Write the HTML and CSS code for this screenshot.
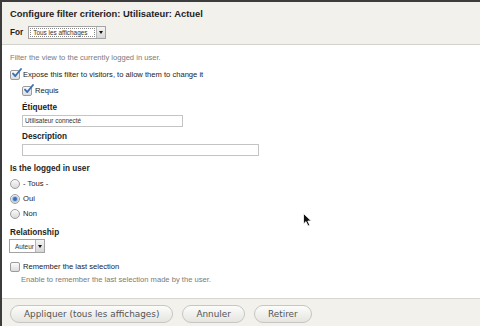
FILE: index.html
```html
<!DOCTYPE html>
<html lang="fr">
<head>
    <meta charset="UTF-8">
    <title>Configure filter criterion</title>
    <link rel="stylesheet" href="styles.css">
</head>
<body>
    <div class="dialog">
        <div class="head">
            <h1 class="title">Configure filter criterion: Utilisateur: Actuel</h1>
            <div class="for-row">
                <span class="for-label">For</span>
                <span class="select select-wide">
                    <span class="select-text focused">Tous les affichages</span>
                    <span class="select-btn"></span>
                </span>
            </div>
        </div>

        <div class="content">
            <p class="hint">Filter the view to the currently logged in user.</p>

            <div class="check-row row-expose">
                <span class="box"><svg class="tick" width="11" height="11" viewBox="0 0 11 11"><path d="M2 5.6 L4.3 8 L10 1" /></svg></span>
                <span>Expose this filter to visitors, to allow them to change it</span>
            </div>

            <div class="sub">
                <div class="check-row row-required">
                    <span class="box"><svg class="tick" width="11" height="11" viewBox="0 0 11 11"><path d="M2 5.6 L4.3 8 L10 1" /></svg></span>
                    <span>Requis</span>
                </div>
                <div class="label label-first">Étiquette</div>
                <div class="text-input input-short">Utilisateur connecté</div>
                <div class="label label-next">Description</div>
                <div class="text-input input-long"></div>
            </div>

            <div class="label label-group">Is the logged in user</div>
            <div class="radios">
                <div class="radio-row"><span class="radio"></span>- Tous -</div>
                <div class="radio-row"><span class="radio checked"></span>Oui</div>
                <div class="radio-row"><span class="radio"></span>Non</div>
            </div>

            <div class="label label-rel">Relationship</div>
            <span class="select select-small">
                <span class="select-text">Auteur</span>
                <span class="select-btn"></span>
            </span>

            <div class="check-row row-remember">
                <span class="box"></span>
                <span>Remember the last selection</span>
            </div>
            <p class="hint hint-indent">Enable to remember the last selection made by the user.</p>
        </div>

        <div class="foot">
            <button class="btn">Appliquer (tous les affichages)</button>
            <button class="btn">Annuler</button>
            <button class="btn">Retirer</button>
        </div>

        <!-- pointeur de la souris -->
        <svg class="cursor" width="10" height="14" viewBox="0 0 10 14">
            <path d="M0.5 0.5 L0.5 11 L3 8.6 L5 13 L6.8 12.2 L4.8 8 L8.3 8 Z" fill="#111" stroke="#fff" stroke-width="0.8"/>
        </svg>
    </div>
</body>
</html>
```

FILE: styles.css
```css
html, body {
    margin: 0;
    padding: 0;
    height: 100%;
    background: #ffffff;
}

.dialog {
    position: relative;
    height: 100vh;
    box-sizing: border-box;
    display: flex;
    flex-direction: column;
    border-top: 2px solid #3c3c3c;
    border-left: 2px solid #3c3c3c;
    font-family: "Liberation Sans", Arial, sans-serif;
    font-size: 7.6px;
    color: #222;
}

/* en-tete */
.head {
    background: #f2f1ec;
    border-bottom: 1px solid #d3d2cd;
    padding: 6px 8px 5px;
}

.title {
    margin: 0;
    font-size: 9.4px;
    line-height: 11px;
    font-weight: bold;
    color: #1e1e1e;
}

.for-row {
    display: flex;
    align-items: center;
    height: 14px;
    margin-top: 6px;
}

.for-label {
    font-weight: bold;
    font-size: 8.2px;
    margin-right: 5px;
}

/* listes deroulantes */
.select {
    display: inline-flex;
    box-sizing: border-box;
    border: 1px solid #a3a3a3;
    background: #fff;
    font-size: 6.4px;
    color: #333;
}

.select-wide {
    width: 78px;
    height: 13px;
}

.select-small {
    width: 36px;
    height: 14px;
    margin-top: 1px;
    margin-left: -1px;
}

.select-text {
    flex: 1;
    display: flex;
    align-items: center;
    padding-left: 3px;
    margin: 1px;
}

.select-text.focused {
    outline: 1px dotted #888;
    outline-offset: -1px;
}

.select-small .select-text {
    padding-left: 4px;
}

.select-btn {
    position: relative;
    width: 8px;
    border-left: 1px solid #b5b5b5;
    background: linear-gradient(#f4f4f4, #d6d6d6);
}

.select-btn::after {
    content: "";
    position: absolute;
    left: 2px;
    top: 50%;
    margin-top: -1px;
    border-left: 2px solid transparent;
    border-right: 2px solid transparent;
    border-top: 3px solid #111;
}

/* contenu */
.content {
    flex: 1;
    padding: 7px 8px 0;
}

.hint {
    margin: 0;
    line-height: 11px;
    color: #7a7a7a;
}

.hint-indent {
    margin-top: 2px;
    padding-left: 11px;
    line-height: 10px;
}

.check-row {
    display: flex;
    align-items: center;
    height: 12px;
    line-height: 12px;
}

.row-expose {
    margin-top: 6px;
}

.row-required {
    margin-top: 4px;
}

.row-remember {
    margin-top: 8px;
}

.box {
    position: relative;
    display: inline-block;
    box-sizing: border-box;
    width: 10px;
    height: 10px;
    margin-right: 3px;
    border: 1px solid #9c9c9c;
    border-radius: 2px;
    background: linear-gradient(#fbfbfb, #dcdcdc);
}

.tick {
    position: absolute;
    left: 0;
    top: -3px;
    overflow: visible;
}

.tick path {
    fill: none;
    stroke: #3a70b5;
    stroke-width: 1.9;
    stroke-linecap: round;
    stroke-linejoin: round;
}

.sub {
    padding-left: 12px;
}

.label {
    font-weight: bold;
    font-size: 8.2px;
    line-height: 10px;
    color: #1e1e1e;
}

.label-first {
    margin-top: 6px;
}

.label-next {
    margin-top: 5px;
}

.label-group {
    margin-top: 8px;
}

.label-rel {
    margin-top: 7px;
}

.text-input {
    box-sizing: border-box;
    height: 12px;
    margin-top: 2px;
    border: 1px solid #c4c4c4;
    background: #fff;
    font-size: 6.4px;
    line-height: 10px;
    padding-left: 2px;
    color: #333;
}

.input-short {
    width: 161px;
}

.input-long {
    width: 237px;
}

/* boutons radio */
.radios {
    margin-top: 2px;
}

.radio-row {
    display: flex;
    align-items: center;
    height: 15px;
}

.radio {
    position: relative;
    box-sizing: border-box;
    width: 10px;
    height: 10px;
    margin-right: 3px;
    border: 1px solid #9e9e9e;
    border-radius: 50%;
    background: linear-gradient(#fbfbfb, #d9d9d9);
}

.radio.checked::after {
    content: "";
    position: absolute;
    left: 2px;
    top: 2px;
    width: 4px;
    height: 4px;
    border-radius: 50%;
    background: #3a70b5;
    box-shadow: 0 0 1px 1px #9dbbe0;
}

/* pied */
.foot {
    display: flex;
    gap: 9px;
    height: 28px;
    padding: 6px 8px 0;
    box-sizing: border-box;
    border-top: 1px solid #d6d5d0;
    background: #f2f1ec;
}

.btn {
    height: 18px;
    padding: 0 13px;
    border: 1px solid #c6c6c2;
    border-radius: 9px;
    background: linear-gradient(#fcfcfb, #e5e4e0);
    font-family: "DejaVu Sans", sans-serif;
    font-size: 8.9px;
    color: #555;
}

.cursor {
    position: absolute;
    left: 301px;
    top: 211px;
}
```
